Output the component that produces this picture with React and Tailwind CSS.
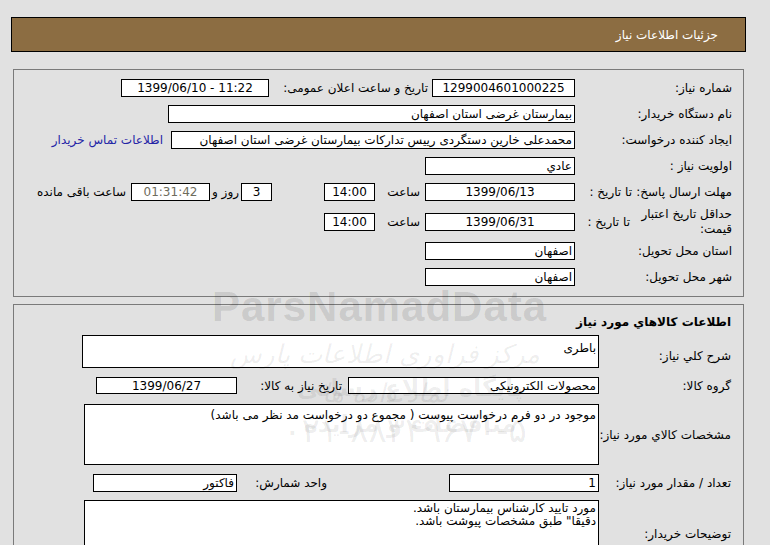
import React from 'react';

const font = { fontFamily: 'Tahoma, "DejaVu Sans", sans-serif' };

function Box({ w, h = 'h-[18px]', align = 'center', className = '', children }) {
  const a = align === 'center' ? 'justify-center' : 'justify-start pr-[2px]';
  return (
    <div
      className={`${w} ${h} shrink-0 bg-white border border-black flex items-center ${a} overflow-hidden whitespace-nowrap ${className}`}
    >
      {children}
    </div>
  );
}

function Row({ h, children, className = '' }) {
  return <div className={`flex items-center ${h} ${className}`}>{children}</div>;
}

export default function App() {
  return (
    <div dir="rtl" style={font} className="relative min-h-[545px] h-[545px] overflow-hidden bg-[#e1e1e1] text-[12px] text-black pt-[17px]">
      {/* header */}
      <div className="ml-[11px] mr-[24px] h-[35px] bg-[#8c6d42] border border-black flex items-center pr-[27px] text-white">
        جزئیات اطلاعات نیاز
      </div>

      {/* panel 1 */}
      <div className="ml-[13px] mr-[26px] mt-[17px] h-[228px] border border-[#7a7a7a] pt-[4px]">
        <Row h="h-[27px]">
          <div className="w-[168px] pr-[11px] shrink-0">شماره نیاز:</div>
          <Box w="w-[143px]">1299004601000225</Box>
          <div className="w-[163px] pr-[4px] shrink-0 whitespace-nowrap">تاریخ و ساعت اعلان عمومی:</div>
          <Box w="w-[148px]">
            <span dir="ltr">1399/06/10 - 11:22</span>
          </Box>
        </Row>
        <Row h="h-[26px]">
          <div className="w-[168px] pr-[11px] shrink-0">نام دستگاه خریدار:</div>
          <Box w="w-[407px]" align="right">بیمارستان غرضی استان اصفهان</Box>
        </Row>
        <Row h="h-[26px]">
          <div className="w-[168px] pr-[11px] shrink-0">ایجاد کننده درخواست:</div>
          <Box w="w-[404px]" align="right">محمدعلی خارین دستگردی رییس تداركات بیمارستان غرضی استان اصفهان</Box>
          <a className="mr-[8px] text-[#2424a6] whitespace-nowrap">اطلاعات تماس خریدار</a>
        </Row>
        <Row h="h-[25px]">
          <div className="w-[168px] pr-[11px] shrink-0">اولویت نیاز :</div>
          <Box w="w-[150px]" align="right">عادي</Box>
        </Row>
        <Row h="h-[28px]">
          <div className="w-[168px] shrink-0 flex items-center">
            <div className="w-[111px] pr-[11px] whitespace-nowrap">مهلت ارسال پاسخ:</div>
            <div className="whitespace-nowrap">تا تاریخ :</div>
          </div>
          <Box w="w-[150px]">1399/06/13</Box>
          <div className="w-[50px] pr-[5px] shrink-0">ساعت</div>
          <Box w="w-[51px]">14:00</Box>
          <div className="w-[52px] shrink-0" />
          <Box w="w-[31px]">3</Box>
          <div className="w-[31px] pr-[2px] shrink-0 whitespace-nowrap">روز و</div>
          <Box w="w-[79px]" className="bg-[#efebc3] text-[#6e6c5c]">01:31:42</Box>
          <div className="pr-[5px] whitespace-nowrap">ساعت باقی مانده</div>
        </Row>
        <Row h="h-[31px]">
          <div className="w-[168px] shrink-0 flex items-center">
            <div className="w-[113px] pr-[11px] leading-[15px]">حداقل تاریخ اعتبار قیمت:</div>
            <div className="whitespace-nowrap">تا تاریخ :</div>
          </div>
          <Box w="w-[150px]">1399/06/31</Box>
          <div className="w-[50px] pr-[5px] shrink-0">ساعت</div>
          <Box w="w-[51px]">14:00</Box>
        </Row>
        <Row h="h-[27px]">
          <div className="w-[168px] pr-[11px] shrink-0">استان محل تحویل:</div>
          <Box w="w-[150px]" align="right">اصفهان</Box>
        </Row>
        <Row h="h-[25px]">
          <div className="w-[168px] pr-[11px] shrink-0">شهر محل تحویل:</div>
          <Box w="w-[150px]" align="right">اصفهان</Box>
        </Row>
      </div>

      {/* panel 2 */}
      <div className="ml-[13px] mr-[26px] mt-[7px] h-[300px] border border-[#7a7a7a] pt-[7px]">
        <div className="h-[20px] flex items-center pr-[12px] font-bold">اطلاعات کالاهاي مورد نیاز</div>
        <Row h="h-[33px]" className="mt-[3px]">
          <div className="w-[144px] pr-[12px] shrink-0 pt-[8px]">شرح کلي نیاز:</div>
          <Box w="w-[517px]" h="h-[33px] items-start pt-[3px]" align="right">باطری</Box>
        </Row>
        <Row h="h-[17px]" className="mt-[9px]">
          <div className="w-[144px] pr-[12px] shrink-0">گروه کالا:</div>
          <Box w="w-[251px]" h="h-[17px]" align="right">محصولات الکترونیکی</Box>
          <div className="w-[111px] pr-[6px] shrink-0 whitespace-nowrap">تاریخ نیاز به کالا:</div>
          <Box w="w-[141px]" h="h-[17px]">1399/06/27</Box>
        </Row>
        <Row h="h-[61px]" className="mt-[10px]">
          <div className="w-[144px] pr-[12px] shrink-0 whitespace-nowrap">مشخصات کالاي مورد نیاز:</div>
          <div className="w-[515px] h-[61px] shrink-0 bg-white border border-black pr-[2px] pt-[1px] whitespace-nowrap overflow-hidden">
            موجود در دو فرم درخواست پیوست ( مجموع دو درخواست مد نظر می باشد)
          </div>
        </Row>
        <Row h="h-[18px]" className="mt-[9px]">
          <div className="w-[144px] pr-[12px] shrink-0 whitespace-nowrap">تعداد / مقدار مورد نیاز:</div>
          <Box w="w-[150px]" align="right">1</Box>
          <div className="w-[212px] pr-[122px] shrink-0 whitespace-nowrap">واحد شمارش:</div>
          <Box w="w-[144px]" align="right">فاکتور</Box>
        </Row>
        <Row h="h-[66px]" className="mt-[8px]">
          <div className="w-[144px] pr-[12px] shrink-0 pt-[2px]">توضیحات خریدار:</div>
          <div className="w-[515px] h-[66px] shrink-0 bg-white border border-black pr-[2px] pt-[1px] leading-[13px] whitespace-nowrap overflow-hidden">
            <div>مورد تایید کارشناس بیمارستان باشد.</div>
            <div>دقیقا" طبق مشخصات پیوشت باشد.</div>
          </div>
        </Row>
      </div>

      {/* watermark */}
      <div dir="ltr" className="pointer-events-none absolute inset-0">
        <div
          className="absolute left-[212px] top-[275px] text-[42px] font-bold text-black/[0.11] tracking-[1px]"
          style={{ fontFamily: '"Liberation Sans", Arial, sans-serif' }}
        >
          ParsNamadData
        </div>
        <div dir="rtl" className="absolute left-[215px] top-[335px] w-[340px] text-center text-[26px] italic text-black/[0.07]">
          مرکز فراوری اطلاعات پارس نماد داده ها
        </div>
        <div dir="rtl" className="absolute left-[240px] top-[370px] w-[340px] text-center text-[24px] font-bold text-black/[0.07]">
          پایگاه اطلاع رسانی مناقصات و مزایده
        </div>
        <div dir="rtl" className="absolute left-[250px] top-[405px] w-[310px] text-center text-[34px] text-black/[0.08]">
          ۰۲۱-۸۸۳۴۹۶۷۰-۵
        </div>
      </div>
    </div>
  );
}
